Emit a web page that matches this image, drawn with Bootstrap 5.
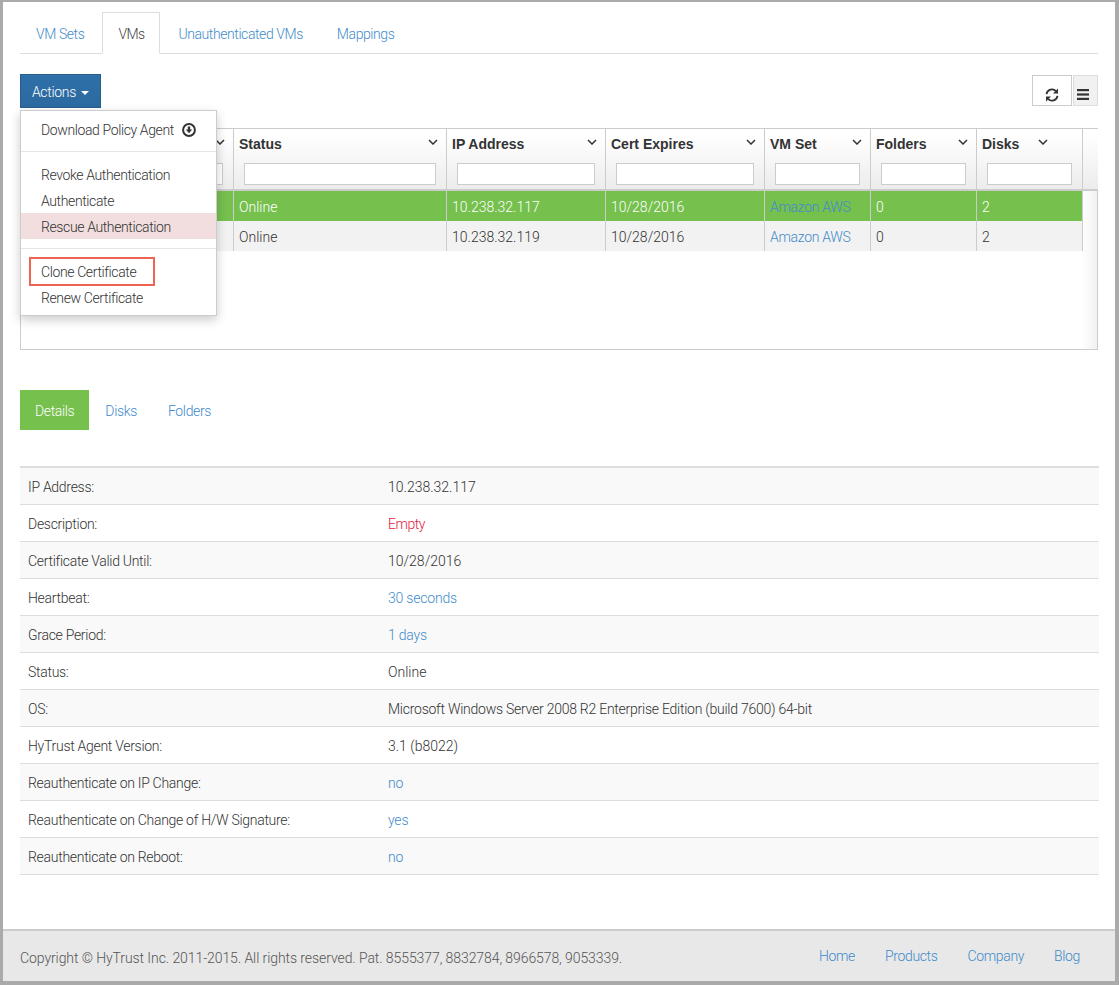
<!DOCTYPE html>
<html lang="en">
<head>
<meta charset="utf-8">
<title>VMs</title>
<link href="https://cdn.jsdelivr.net/npm/bootstrap@5.3.0/dist/css/bootstrap.min.css" rel="stylesheet">
<style>
html,body{height:100%;}
body{font-family:Roboto,"Liberation Sans",Arial,sans-serif;font-weight:300;font-size:14px;line-height:20px;color:#333;background:#fff;overflow:hidden;}
a{text-decoration:none;color:#428bca;}
.frame{height:985px;border:solid #aaa;border-width:2px 4px 4px 3px;}
.page-body{padding:10px 17px 0;}
.main-tabs{border-bottom:1px solid #ddd;--bs-nav-tabs-border-color:#ddd;}
.main-tabs .nav-link{padding:11px 15px 9px;line-height:20px;color:#428bca;border-radius:0;margin-right:2px;margin-bottom:-1px;border:1px solid transparent;font-weight:300;letter-spacing:-.42px;}
.main-tabs .nav-link.active{color:#444;border-color:#ddd #ddd #fff;background:#fff;letter-spacing:-.6px;}
.toolbar{margin-top:20px;}
.act-btn{background:linear-gradient(#2f70a9,#2c6aa0);border:1px solid #285e8e;color:#fff;border-radius:0;height:34px;width:81px;padding:2px 0 0;font-size:14px;font-weight:300;letter-spacing:-.3px;}
.act-btn.dropdown-toggle::after{border-top-width:4px;border-left-width:4px;border-right-width:4px;margin-left:5px;vertical-align:2px;}
.act-menu{position:absolute;top:36px;left:0;width:197px;margin:0;padding:5px 0;border:1px solid #ccc;border-radius:0;box-shadow:0 4px 10px rgba(0,0,0,.2);font-size:14px;z-index:5;--bs-dropdown-link-color:#333;}
.act-menu .dropdown-item{padding:4px 20px 2px;line-height:20px;color:#333;position:relative;font-weight:300;letter-spacing:-.38px;}
.act-menu .dropdown-item.hot{background:#f2dede;}
.act-menu .dropdown-divider{margin:9px 0;border-top-color:#e5e5e5;opacity:1;}
.act-menu svg{vertical-align:-2px;margin-left:5px;}
.call-box{position:absolute;left:8px;top:-1px;width:126px;height:29px;border:2px solid #ee6352;pointer-events:none;}
.tool-refresh{width:40px;height:31px;border:1px solid #ccc;background:#fff;padding:0;border-radius:0;margin-top:1px;line-height:1;}
.tool-menu{width:25px;height:31px;border:1px solid #ddd;background:#f1f1f1;padding:0;border-radius:0;margin:1px 0 0 1px;line-height:1;}
.tool-menu svg{display:block;margin:8px auto 0 3px;}
.tool-refresh svg{display:block;margin:9px auto 0 12px;}
.grid-box{margin-top:20px;height:222px;border:1px solid #ccc;background:linear-gradient(90deg,#fff,#f1f1f1) right top/15px 100% no-repeat;}
.vm-grid{table-layout:fixed;width:1077px;border-collapse:separate;border-spacing:0;}
.vm-grid th{height:62px;padding:0;vertical-align:top;background:linear-gradient(#fff 10%,#ececec);border-right:1px solid #ccc;border-bottom:2px solid #ccc;font-family:"Liberation Sans",Arial,sans-serif;font-weight:700;}
.vm-grid thead tr{height:62px;}
.vm-grid th:last-child,.vm-grid td:last-child{border-right:0;}
.head-line{display:flex;justify-content:space-between;align-items:center;height:30px;padding:0 8px 0 5px;}
.head-line.near{justify-content:flex-start;gap:19px;}
.head-line svg{margin-top:-4px;}
.filter-in{display:block;width:calc(100% - 20px);height:22px;margin:4px 10px 4px;border:1px solid #ccc;background:#fff;padding:0;border-radius:0;}
.vm-grid td{height:30px;padding:2px 5px 0;border-right:1px solid #ccc;vertical-align:middle;white-space:nowrap;}
.vm-grid td a{letter-spacing:-.3px;}
.vm-grid tr.sel td{background:#76c04e;color:#fff;}
.vm-grid tr.alt td{background:#f2f2f2;}
.vm-grid tr td:last-child{background:transparent!important;}
.detail-tabs{margin-top:40px;}
.detail-tabs .nav-link{padding:11px 15px 9px;height:40px;line-height:20px;border-radius:0;color:#428bca;margin-right:1px;font-weight:300;letter-spacing:-.35px;}
.detail-tabs .nav-link.active{background:#76c04e;color:#fff;}
.info-table{margin:36px 0 0;width:1079px;border-top:2px solid #ddd;}
.info-table td{height:37px;padding:3px 8px 0;border-bottom:1px solid #ddd;vertical-align:middle;color:#333;background:#fff;box-shadow:none;}
.info-table tr:nth-child(odd) td{background:#f9f9f9;}
.info-table td:first-child{width:360px;letter-spacing:-.29px;}
.info-table td.word-val{letter-spacing:-.25px;}
.info-table a{color:#428bca;letter-spacing:-.2px;}
.info-table a.val-empty{color:#e3173e;letter-spacing:-.5px;}
.frame-wrap{display:flex;flex-direction:column;height:100%;}
.site-foot{margin-top:auto;height:52px;background:#e8e8e8;border-top:2px solid #ccc;padding:0 35px 0 17px;color:#555;}
.site-foot .copy{margin-top:3px;letter-spacing:-.08px;}
.site-foot .links{gap:30px;}
.site-foot .links a{letter-spacing:-.35px;}
</style>
</head>
<body>
<div class="frame">
<div class="frame-wrap">
<div class="page-body">
  <ul class="nav nav-tabs main-tabs">
    <li class="nav-item"><a class="nav-link" href="#">VM Sets</a></li>
    <li class="nav-item"><a class="nav-link active" href="#">VMs</a></li>
    <li class="nav-item"><a class="nav-link" href="#">Unauthenticated VMs</a></li>
    <li class="nav-item"><a class="nav-link" href="#">Mappings</a></li>
  </ul>

  <div class="toolbar d-flex justify-content-between align-items-start">
    <div class="dropdown position-relative">
      <button class="btn act-btn dropdown-toggle" type="button">Actions</button>
      <ul class="dropdown-menu show act-menu">
        <li><a class="dropdown-item" href="#">Download Policy Agent
          <svg width="14" height="14" viewBox="0 0 14 14" aria-hidden="true"><circle cx="7" cy="7" r="5.9" fill="none" stroke="#333" stroke-width="2"/><path d="M5.8 3.4h2.4v3.2h2L7 10.3 3.8 6.6h2z" fill="#333"/></svg></a></li>
        <li><hr class="dropdown-divider"></li>
        <li><a class="dropdown-item" href="#">Revoke Authentication</a></li>
        <li><a class="dropdown-item" href="#">Authenticate</a></li>
        <li><a class="dropdown-item hot" href="#">Rescue Authentication</a></li>
        <li><hr class="dropdown-divider"></li>
        <li><a class="dropdown-item" href="#">Clone Certificate<span class="call-box"></span></a></li>
        <li><a class="dropdown-item" href="#">Renew Certificate</a></li>
      </ul>
    </div>
    <div class="d-flex">
      <button class="tool-refresh" type="button" aria-label="Refresh">
        <svg width="14" height="14" viewBox="0 0 14 14" fill="none" stroke="#333" stroke-width="1.8"><path d="M1.5 6.2A5.5 5.5 0 0 1 11 3.2"/><path d="M12.5 7.8A5.5 5.5 0 0 1 3 10.8"/><path d="M13 .6v5H8z" fill="#333" stroke="none"/><path d="M1 13.4v-5h5z" fill="#333" stroke="none"/></svg>
      </button>
      <button class="tool-menu" type="button" aria-label="Columns">
        <svg width="12" height="11" viewBox="0 0 12 11" fill="#333"><rect y="0" width="12" height="2.2"/><rect y="4.4" width="12" height="2.2"/><rect y="8.8" width="12" height="2.2"/></svg>
      </button>
    </div>
  </div>

  <div class="grid-box">
    <table class="vm-grid">
      <colgroup><col style="width:213px"><col style="width:213px"><col style="width:159px"><col style="width:159px"><col style="width:106px"><col style="width:106px"><col style="width:106px"><col style="width:15px"></colgroup>
      <thead><tr>
        <th><div class="head-line"><span></span><svg width="10" height="6" viewBox="0 0 10 6" fill="none" stroke="#333" stroke-width="1.5"><path d="M1 1l4 4 4-4"/></svg></div><input class="filter-in" type="text" aria-label="Filter"></th>
        <th><div class="head-line"><span>Status</span><svg width="10" height="6" viewBox="0 0 10 6" fill="none" stroke="#333" stroke-width="1.5"><path d="M1 1l4 4 4-4"/></svg></div><input class="filter-in" type="text" aria-label="Filter Status"></th>
        <th><div class="head-line"><span>IP Address</span><svg width="10" height="6" viewBox="0 0 10 6" fill="none" stroke="#333" stroke-width="1.5"><path d="M1 1l4 4 4-4"/></svg></div><input class="filter-in" type="text" aria-label="Filter IP"></th>
        <th><div class="head-line"><span>Cert Expires</span><svg width="10" height="6" viewBox="0 0 10 6" fill="none" stroke="#333" stroke-width="1.5"><path d="M1 1l4 4 4-4"/></svg></div><input class="filter-in" type="text" aria-label="Filter Cert"></th>
        <th><div class="head-line"><span>VM Set</span><svg width="10" height="6" viewBox="0 0 10 6" fill="none" stroke="#333" stroke-width="1.5"><path d="M1 1l4 4 4-4"/></svg></div><input class="filter-in" type="text" aria-label="Filter VM Set"></th>
        <th><div class="head-line"><span>Folders</span><svg width="10" height="6" viewBox="0 0 10 6" fill="none" stroke="#333" stroke-width="1.5"><path d="M1 1l4 4 4-4"/></svg></div><input class="filter-in" type="text" aria-label="Filter Folders"></th>
        <th><div class="head-line near"><span>Disks</span><svg width="10" height="6" viewBox="0 0 10 6" fill="none" stroke="#333" stroke-width="1.5"><path d="M1 1l4 4 4-4"/></svg></div><input class="filter-in" type="text" aria-label="Filter Disks"></th>
        <th></th>
      </tr></thead>
      <tbody>
        <tr class="sel"><td></td><td>Online</td><td>10.238.32.117</td><td>10/28/2016</td><td><a href="#">Amazon AWS</a></td><td>0</td><td>2</td><td></td></tr>
        <tr class="alt"><td></td><td>Online</td><td>10.238.32.119</td><td>10/28/2016</td><td><a href="#">Amazon AWS</a></td><td>0</td><td>2</td><td></td></tr>
      </tbody>
    </table>
  </div>

  <ul class="nav nav-pills detail-tabs">
    <li class="nav-item"><a class="nav-link active" href="#">Details</a></li>
    <li class="nav-item"><a class="nav-link" href="#">Disks</a></li>
    <li class="nav-item"><a class="nav-link" href="#">Folders</a></li>
  </ul>

  <table class="info-table">
    <tbody>
      <tr><td>IP Address:</td><td>10.238.32.117</td></tr>
      <tr><td>Description:</td><td><a class="val-empty" href="#">Empty</a></td></tr>
      <tr><td>Certificate Valid Until:</td><td>10/28/2016</td></tr>
      <tr><td>Heartbeat:</td><td><a href="#">30 seconds</a></td></tr>
      <tr><td>Grace Period:</td><td><a href="#">1 days</a></td></tr>
      <tr><td>Status:</td><td>Online</td></tr>
      <tr><td>OS:</td><td class="word-val">Microsoft Windows Server 2008 R2 Enterprise Edition (build 7600) 64-bit</td></tr>
      <tr><td>HyTrust Agent Version:</td><td>3.1 (b8022)</td></tr>
      <tr><td>Reauthenticate on IP Change:</td><td><a href="#">no</a></td></tr>
      <tr><td>Reauthenticate on Change of H/W Signature:</td><td><a href="#">yes</a></td></tr>
      <tr><td>Reauthenticate on Reboot:</td><td><a href="#">no</a></td></tr>
    </tbody>
  </table>
</div>

<footer class="site-foot d-flex justify-content-between align-items-center">
  <div class="copy">Copyright © HyTrust Inc. 2011-2015. All rights reserved. Pat. 8555377, 8832784, 8966578, 9053339.</div>
  <div class="links d-flex">
    <a href="#">Home</a><a href="#">Products</a><a href="#">Company</a><a href="#">Blog</a>
  </div>
</footer>
</div>
</div>
<script src="https://cdn.jsdelivr.net/npm/bootstrap@5.3.0/dist/js/bootstrap.bundle.min.js"></script>
</body>
</html>
